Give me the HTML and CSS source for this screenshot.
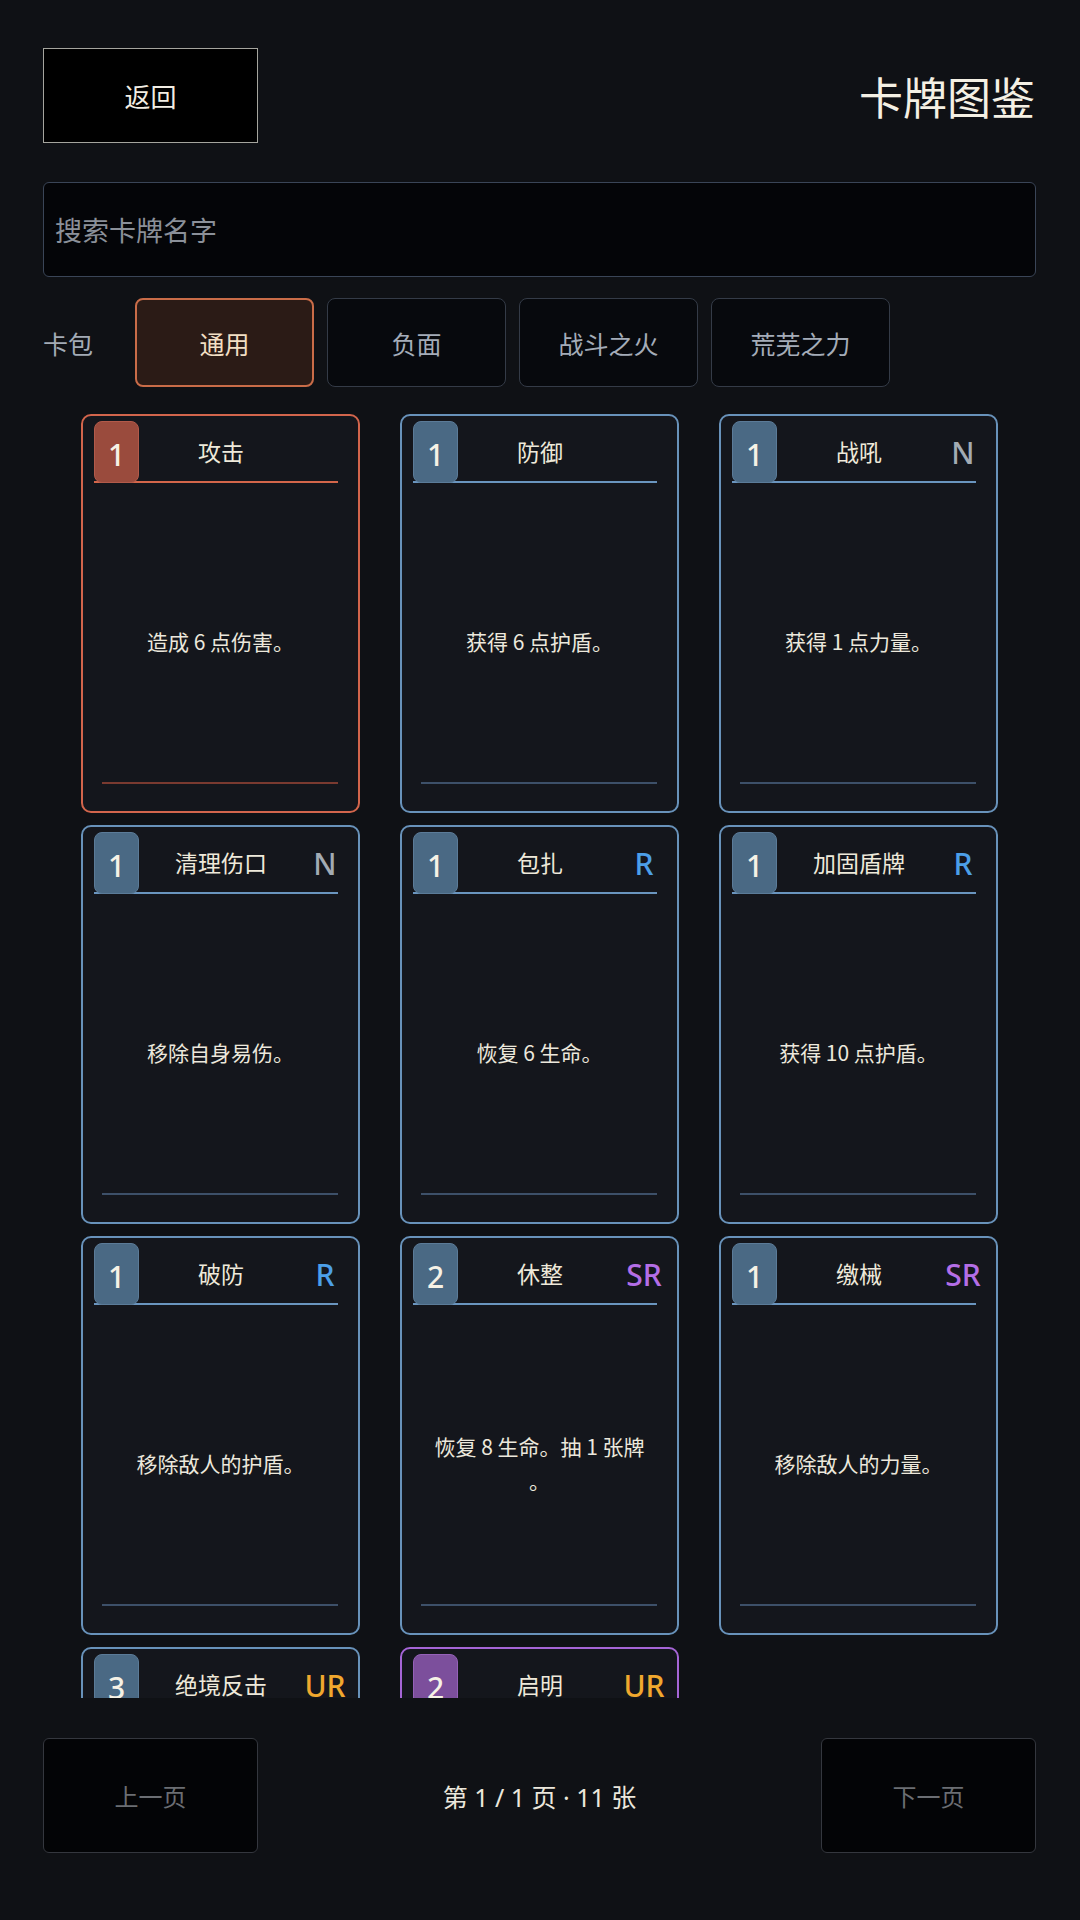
FILE: index.html
```html
<!DOCTYPE html>
<html lang="zh-CN">
<head>
<meta charset="utf-8">
<title>卡牌图鉴</title>
<link rel="stylesheet" href="styles.css">
</head>
<body>
<div class="app">
  <header class="topbar">
    <button class="back-btn">返回</button>
    <h1 class="page-title">卡牌图鉴</h1>
  </header>

  <div class="search">
    <input class="search-input" type="text" placeholder="搜索卡牌名字">
  </div>

  <div class="packs">
    <span class="packs-label">卡包</span>
    <button class="pack-tab active">通用</button>
    <button class="pack-tab">负面</button>
    <button class="pack-tab">战斗之火</button>
    <button class="pack-tab">荒芜之力</button>
  </div>

  <div class="card-scroll">
    <div class="card-grid">
      <div class="card card-attack">
        <div class="card-head"><span class="cost cost-red">1</span><span class="card-name">攻击</span><span class="rarity"></span></div>
        <div class="card-body">造成 6 点伤害。</div>
        <div class="card-foot"></div>
      </div>
      <div class="card">
        <div class="card-head"><span class="cost">1</span><span class="card-name">防御</span><span class="rarity"></span></div>
        <div class="card-body">获得 6 点护盾。</div>
        <div class="card-foot"></div>
      </div>
      <div class="card">
        <div class="card-head"><span class="cost">1</span><span class="card-name">战吼</span><span class="rarity r-n">N</span></div>
        <div class="card-body">获得 1 点力量。</div>
        <div class="card-foot"></div>
      </div>
      <div class="card">
        <div class="card-head"><span class="cost">1</span><span class="card-name">清理伤口</span><span class="rarity r-n">N</span></div>
        <div class="card-body">移除自身易伤。</div>
        <div class="card-foot"></div>
      </div>
      <div class="card">
        <div class="card-head"><span class="cost">1</span><span class="card-name">包扎</span><span class="rarity r-r">R</span></div>
        <div class="card-body">恢复 6 生命。</div>
        <div class="card-foot"></div>
      </div>
      <div class="card">
        <div class="card-head"><span class="cost">1</span><span class="card-name">加固盾牌</span><span class="rarity r-r">R</span></div>
        <div class="card-body">获得 10 点护盾。</div>
        <div class="card-foot"></div>
      </div>
      <div class="card">
        <div class="card-head"><span class="cost">1</span><span class="card-name">破防</span><span class="rarity r-r">R</span></div>
        <div class="card-body">移除敌人的护盾。</div>
        <div class="card-foot"></div>
      </div>
      <div class="card">
        <div class="card-head"><span class="cost">2</span><span class="card-name">休整</span><span class="rarity r-sr">SR</span></div>
        <div class="card-body">恢复 8 生命。抽 1 张牌。</div>
        <div class="card-foot"></div>
      </div>
      <div class="card">
        <div class="card-head"><span class="cost">1</span><span class="card-name">缴械</span><span class="rarity r-sr">SR</span></div>
        <div class="card-body">移除敌人的力量。</div>
        <div class="card-foot"></div>
      </div>
      <div class="card">
        <div class="card-head"><span class="cost">3</span><span class="card-name">绝境反击</span><span class="rarity r-ur">UR</span></div>
        <div class="card-body">造成 20 点伤害。</div>
        <div class="card-foot"></div>
      </div>
      <div class="card card-purple">
        <div class="card-head"><span class="cost cost-purple">2</span><span class="card-name">启明</span><span class="rarity r-ur">UR</span></div>
        <div class="card-body">抽 3 张牌。</div>
        <div class="card-foot"></div>
      </div>
    </div>
  </div>

  <footer class="pager">
    <button class="page-btn">上一页</button>
    <span class="page-info">第 1 / 1 页 · 11 张</span>
    <button class="page-btn">下一页</button>
  </footer>
</div>
</body>
</html>
```
FILE: styles.css
```css
* { box-sizing: border-box; }

html, body {
  margin: 0;
  padding: 0;
  background: #0f1115;
}

body {
  width: 1080px;
  height: 1920px;
  overflow: hidden;
  font-family: "Noto Sans CJK SC", "Noto Sans", sans-serif;
  color: #ece8dc;
}

button, input {
  font-family: inherit;
}

.app {
  padding: 48px 44px 0 43px;
  display: flex;
  flex-direction: column;
}

.topbar {
  display: flex;
  align-items: center;
  justify-content: space-between;
  height: 95px;
}

.back-btn {
  width: 215px;
  height: 95px;
  background: #000;
  border: 1px solid #a5a59e;
  border-radius: 0;
  color: #f2eee4;
  font-size: 26px;
  padding: 0;
}

.page-title {
  margin: 0;
  font-size: 44px;
  font-weight: 400;
  color: #f4f0e4;
  line-height: 1;
  padding-right: 1px;
}

.search {
  margin-top: 39px;
}

.search-input {
  display: block;
  width: 100%;
  height: 95px;
  background: #040508;
  border: 1px solid #3a4557;
  border-radius: 6px;
  padding: 0 11px;
  font-size: 27px;
  color: #e0e0e0;
  outline: none;
}

.search-input::placeholder {
  color: #8b9099;
}

.packs {
  margin-top: 21px;
  display: flex;
  align-items: center;
  gap: 13px;
  height: 89px;
}

.packs-label {
  width: 79px;
  font-size: 25px;
  color: #a3abb6;
}

.pack-tab {
  width: 179px;
  height: 89px;
  background: #07090d;
  border: 1px solid #343b47;
  border-radius: 8px;
  color: #a4acb8;
  font-size: 25px;
  padding: 0;
}

.pack-tab.active {
  background: #2b1b16;
  border: 2px solid #c96c48;
  color: #f2dfc4;
}

.card-scroll {
  margin-top: 14px;
  height: 1297px;
  overflow: hidden;
  padding-top: 13px;
}

.card-grid {
  display: grid;
  grid-template-columns: repeat(3, 279px);
  grid-auto-rows: 399px;
  column-gap: 40px;
  row-gap: 12px;
  justify-content: center;
}

.card {
  background: #14161c;
  border: 2px solid #6892ba;
  border-radius: 10px;
  display: flex;
  flex-direction: column;
}

.card-attack { border-color: #d2654c; }
.card-purple { border-color: #a565d6; }

.card-head {
  margin: 5px 20px 0 11px;
  height: 62px;
  border-bottom: 2px solid #6a95bf;
  display: grid;
  grid-template-columns: 45px 1fr 35px;
  align-items: center;
}

.card-attack .card-head { border-bottom-color: #d4664a; }

.cost {
  align-self: stretch;
  margin-bottom: -2px;
  background: #4a6984;
  border: 1px solid #5b7b98;
  border-radius: 8px;
  color: #f6f2e6;
  font-family: "Noto Sans", sans-serif;
  font-size: 30px;
  font-weight: 500;
  display: flex;
  align-items: center;
  justify-content: center;
  padding-top: 4px;
}

.cost-red {
  background: #9a4b3d;
  border-color: #b25a4a;
}

.cost-purple {
  background: #7c4f9c;
  border-color: #9561b8;
}

.card-name {
  text-align: center;
  font-size: 23px;
  color: #eee9da;
}

.rarity {
  display: flex;
  justify-content: center;
  padding-left: 9px;
  font-family: "Noto Sans", sans-serif;
  font-size: 30px;
  font-weight: 500;
  white-space: nowrap;
  padding-top: 2px;
}

.r-n { color: #a3abb3; }
.r-r { color: #4c9fe8; }
.r-sr { color: #b46ee6; }
.r-ur { color: #f0a82e; }

.card-body {
  flex: 1;
  display: flex;
  align-items: center;
  justify-content: center;
  text-align: center;
  padding: 16px 26px 0;
  font-size: 21px;
  line-height: 34px;
  color: #ece8dc;
  line-break: anywhere;
}

.card-foot {
  margin: 0 20px 27px 19px;
  border-top: 2px solid #3d5069;
}

.card-attack .card-foot { border-top-color: #7a3a30; }

.pager {
  margin-top: 40px;
  display: flex;
  align-items: center;
  justify-content: space-between;
}

.page-btn {
  width: 215px;
  height: 115px;
  background: #030406;
  border: 1px solid #34373e;
  border-radius: 6px;
  color: #6b6e73;
  font-size: 24px;
  padding: 0;
}

.page-info {
  font-family: "Noto Sans", "Noto Sans CJK SC", sans-serif;
  font-size: 25px;
  color: #ebe7dc;
}
```
